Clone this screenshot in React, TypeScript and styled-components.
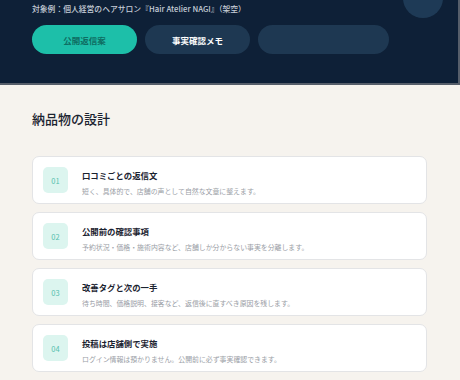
import React from "react";
import styled, { createGlobalStyle } from "styled-components";

const Global = createGlobalStyle`
  * { box-sizing: border-box; }
  html, body { margin: 0; padding: 0; }
  body {
    background: #f6f3ee;
    font-family: "Noto Sans CJK JP", "Noto Sans", sans-serif;
    overflow: hidden;
  }
`;

const Hero = styled.header`
  position: relative;
  overflow: hidden;
  background: #0e2037;
  padding: 3px 32px 29px;
  border-right: 2px solid #565e6a;
  border-bottom: 2px solid #565e6a;
`;

const Orb = styled.div`
  position: absolute;
  top: -22px;
  left: 403px;
  width: 40px;
  height: 40px;
  border-radius: 50%;
  background: #1e3a56;
`;

const Subject = styled.p`
  margin: 0;
  font-size: 7.8px;
  line-height: 11px;
  color: #c6ced8;
  font-weight: 500;
`;

const TabRow = styled.div`
  display: flex;
  gap: 8px;
  margin-top: 11px;
`;

const Tab = styled.div<{ $active?: boolean; $w: number }>`
  width: ${(p) => p.$w}px;
  height: 29px;
  border-radius: 15px;
  display: flex;
  align-items: center;
  justify-content: center;
  font-size: 8.5px;
  font-weight: 700;
  background: ${(p) => (p.$active ? "#1dbfa9" : "#1e3852")};
  color: ${(p) => (p.$active ? "#0f6d62" : "#ffffff")};
`;

const Section = styled.section`
  padding: 25px 32px 0 32px;
`;

const Heading = styled.h2`
  margin: 0 0 28px;
  font-size: 13px;
  line-height: 18px;
  font-weight: 500;
  color: #1b2330;
`;

const List = styled.div`
  display: flex;
  flex-direction: column;
  gap: 8px;
  width: 395px;
`;

const Card = styled.div`
  height: 48px;
  background: #ffffff;
  border: 1px solid #e3e4e6;
  border-radius: 7px;
  display: flex;
  align-items: center;
  padding-left: 10px;
  gap: 14px;
`;

const Badge = styled.div`
  width: 25px;
  height: 26px;
  border-radius: 5px;
  background: #dcf5ef;
  color: #55bfae;
  font-size: 7.5px;
  display: flex;
  align-items: center;
  justify-content: center;
  flex: none;
`;

const Texts = styled.div`
  display: flex;
  flex-direction: column;
  gap: 5px;
  padding-top: 5px;
`;

const Title = styled.div`
  font-size: 8.4px;
  line-height: 12px;
  font-weight: 700;
  color: #1b2330;
`;

const Desc = styled.div`
  font-size: 6.9px;
  line-height: 10px;
  color: #9a9ea6;
`;

const items = [
  { n: "01", t: "口コミごとの返信文", d: "短く、具体的で、店舗の声として自然な文章に整えます。" },
  { n: "02", t: "公開前の確認事項", d: "予約状況・価格・施術内容など、店舗しか分からない事実を分離します。" },
  { n: "03", t: "改善タグと次の一手", d: "待ち時間、価格説明、接客など、返信後に直すべき原因を残します。" },
  { n: "04", t: "投稿は店舗側で実施", d: "ログイン情報は預かりません。公開前に必ず事実確認できます。" },
];

export default function App() {
  return (
    <>
      <Global />
      <Hero>
        <Orb />
        <Subject>対象例：個人経営のヘアサロン『Hair Atelier NAGI』（架空）</Subject>
        <TabRow>
          <Tab $active $w={105}>公開返信案</Tab>
          <Tab $w={105}>事実確認メモ</Tab>
          <Tab $w={131} />
        </TabRow>
      </Hero>
      <Section>
        <Heading>納品物の設計</Heading>
        <List>
          {items.map((it) => (
            <Card key={it.n}>
              <Badge>{it.n}</Badge>
              <Texts>
                <Title>{it.t}</Title>
                <Desc>{it.d}</Desc>
              </Texts>
            </Card>
          ))}
        </List>
      </Section>
    </>
  );
}
